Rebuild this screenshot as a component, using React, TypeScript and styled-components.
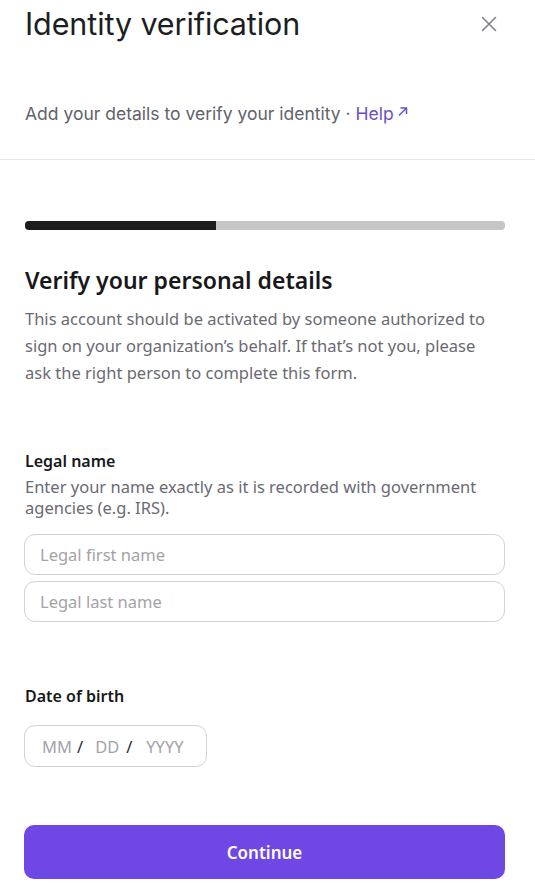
import styled, { createGlobalStyle } from 'styled-components';

const GlobalStyle = createGlobalStyle`
  html, body {
    margin: 0;
    padding: 0;
    background: #ffffff;
  }

  * {
    box-sizing: border-box;
  }
`;

const Panel = styled.div`
  width: 535px;
  min-height: 883px;
  background: #fff;
  display: flex;
  flex-direction: column;
`;

const Header = styled.header`
  border-bottom: 1px solid #e6e6e9;
  padding: 4px 30px 33px 25px;
`;

const TitleRow = styled.div`
  align-items: center;
  display: flex;
  justify-content: space-between;
`;

const Title = styled.h1`
  color: #1b1f24;
  font-family: Inter, 'Liberation Sans', sans-serif;
  font-size: 30.5px;
  font-weight: 400;
  letter-spacing: -0.1px;
  line-height: 40px;
  margin: 0;
`;

const CloseButton = styled.button`
  background: none;
  border: 0;
  color: #80828a;
  cursor: pointer;
  display: flex;
  margin-right: 8px;
  padding: 0;
`;

const Subtitle = styled.p`
  color: #5f626b;
  font-family: Inter, 'Liberation Sans', sans-serif;
  font-size: 17.5px;
  line-height: 24px;
  margin: 58px 0 0;
`;

const HelpLink = styled.a`
  color: #6a4fc9;
  text-decoration: none;

  svg {
    margin-left: 3px;
    vertical-align: 3px;
  }
`;

const Body = styled.main`
  display: flex;
  flex-direction: column;
  font-family: 'Noto Sans', 'Open Sans', sans-serif;
  padding: 61px 30px 0 24px;
`;

const Progress = styled.div`
  background: #c6c6c6;
  border-radius: 4px;
  height: 9px;
  margin-left: 1px;
  overflow: hidden;
`;

const ProgressFill = styled.div`
  background: #1c1c1e;
  height: 100%;
`;

const SectionTitle = styled.h2`
  color: #18181a;
  font-size: 23px;
  font-weight: 600;
  line-height: 32px;
  margin: 34px 0 0 1px;
`;

const Description = styled.p`
  color: #6a6a72;
  font-size: 16.5px;
  line-height: 27px;
  margin: 9px 0 0 1px;
`;

const Field = styled.section<{ $gap: number }>`
  display: flex;
  flex-direction: column;
  margin-top: ${({ $gap }) => $gap}px;
`;

const Label = styled.label`
  color: #18181a;
  font-size: 16px;
  font-weight: 600;
  line-height: 24px;
  margin-left: 1px;
`;

const Hint = styled.p`
  color: #6a6a72;
  font-size: 16.5px;
  line-height: 21px;
  margin: 3px 0 16px 1px;
`;

const Input = styled.input`
  border: 1px solid #d3d3d6;
  border-radius: 11px;
  color: #18181a;
  font-family: inherit;
  font-size: 16.5px;
  height: 41px;
  outline: none;
  padding: 0 15px;
  width: 100%;

  & + & {
    margin-top: 6px;
  }

  &::placeholder {
    color: #a3a3a8;
  }
`;

const DateBox = styled.div`
  align-items: center;
  border: 1px solid #d3d3d6;
  border-radius: 11px;
  color: #a3a3a8;
  display: flex;
  font-size: 16.5px;
  height: 42px;
  margin-top: 17px;
  padding: 0 17px;
  width: 183px;
`;

const Segment = styled.span<{ $width: number }>`
  width: ${({ $width }) => $width}px;
`;

const Slash = styled.span<{ $after: number }>`
  color: #2a2a2e;
  margin: 0 ${({ $after }) => $after}px 0 4px;
`;

const ContinueButton = styled.button`
  background: #6e47e5;
  border: 0;
  border-radius: 10px;
  color: #fff;
  cursor: pointer;
  font-family: inherit;
  font-size: 17px;
  font-weight: 600;
  height: 54px;
  margin-top: 58px;
  width: 100%;
`;

const steps = { done: 2, total: 5 };

export default function App() {
  return (
    <>
      <GlobalStyle />
      <Panel>
        <Header>
          <TitleRow>
            <Title>Identity verification</Title>
            <CloseButton aria-label="Close">
              <svg width="16" height="16" viewBox="0 0 16 16" fill="none" stroke="currentColor" strokeWidth="1.6" strokeLinecap="round">
                <path d="M1.5 1.5l13 13M14.5 1.5l-13 13" />
              </svg>
            </CloseButton>
          </TitleRow>
          <Subtitle>
            Add your details to verify your identity ·{' '}
            <HelpLink href="#">
              Help
              <svg width="11" height="11" viewBox="0 0 11 11" fill="none" stroke="currentColor" strokeWidth="1.5">
                <path d="M2 9.5L9.5 2M3.5 2h6v6" />
              </svg>
            </HelpLink>
          </Subtitle>
        </Header>

        <Body>
          <Progress>
            <ProgressFill style={{ width: `${(steps.done / steps.total) * 100 - 0.3}%` }} />
          </Progress>

          <SectionTitle>Verify your personal details</SectionTitle>
          <Description>
            This account should be activated by someone authorized to sign on your organization’s behalf. If that’s
            not you, please ask the right person to complete this form.
          </Description>

          <Field $gap={63}>
            <Label>Legal name</Label>
            <Hint>Enter your name exactly as it is recorded with government agencies (e.g. IRS).</Hint>
            <Input placeholder="Legal first name" />
            <Input placeholder="Legal last name" />
          </Field>

          <Field $gap={62}>
            <Label>Date of birth</Label>
            <DateBox>
              <Segment $width={31}>MM</Segment>
              <Slash $after={12}>/</Slash>
              <Segment $width={27}>DD</Segment>
              <Slash $after={14}>/</Slash>
              <Segment $width={40}>YYYY</Segment>
            </DateBox>
          </Field>

          <ContinueButton>Continue</ContinueButton>
        </Body>
      </Panel>
    </>
  );
}
